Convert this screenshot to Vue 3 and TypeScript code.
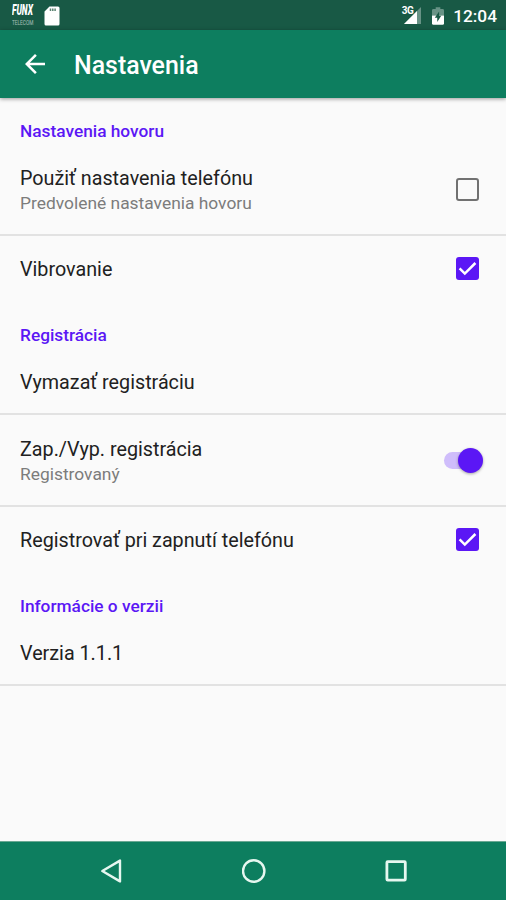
<script setup lang="ts">
import { ref } from 'vue'

type Control = 'none' | 'checkbox' | 'switch'

interface Preference {
  title: string
  summary?: string
  control: Control
  on: boolean
}

interface Category {
  name: string
  items: Preference[]
}

const categories = ref<Category[]>([
  {
    name: 'Nastavenia hovoru',
    items: [
      { title: 'Použiť nastavenia telefónu', summary: 'Predvolené nastavenia hovoru', control: 'checkbox', on: false },
      { title: 'Vibrovanie', control: 'checkbox', on: true },
    ],
  },
  {
    name: 'Registrácia',
    items: [
      { title: 'Vymazať registráciu', control: 'none', on: false },
      { title: 'Zap./Vyp. registrácia', summary: 'Registrovaný', control: 'switch', on: true },
      { title: 'Registrovať pri zapnutí telefónu', control: 'checkbox', on: true },
    ],
  },
  {
    name: 'Informácie o verzii',
    items: [{ title: 'Verzia 1.1.1', control: 'none', on: false }],
  },
])

function toggle(item: Preference) {
  if (item.control !== 'none') item.on = !item.on
}
</script>

<template>
  <div class="screen">
    <div class="status">
      <div class="brand">
        <span class="brand-name">FUNX</span>
        <span class="brand-sub">TELECOM</span>
      </div>
      <svg class="sd" width="16" height="20" viewBox="0 0 16 20">
        <path d="M5.5 0.5H14a1.5 1.5 0 0 1 1.5 1.5V18a1.5 1.5 0 0 1-1.5 1.5H2A1.5 1.5 0 0 1 .5 18V5.5z" fill="#fff" />
        <path d="M6.5 2.5v2.4M8.8 2.5v2.4M11.1 2.5v2.4" stroke="#57806f" stroke-width="1.5" />
      </svg>
      <div class="spacer"></div>
      <span class="net">3G</span>
      <svg class="signal" width="17" height="17" viewBox="0 0 17 17">
        <path d="M17 0V17H0z" fill="#fff" fill-opacity=".35" />
        <path d="M13 4V17H0z" fill="#fff" />
      </svg>
      <svg class="battery" width="12" height="18" viewBox="0 0 13 19">
        <path d="M4 0h5v2h2.5A1.5 1.5 0 0 1 13 3.5V9H0V3.5A1.5 1.5 0 0 1 1.5 2H4z" fill="#fff" fill-opacity=".35" />
        <path d="M0 9h13v8.5a1.5 1.5 0 0 1-1.5 1.5h-10A1.5 1.5 0 0 1 0 17.5z" fill="#fff" />
        <path d="M7.7 4.5 3 11.5h2.7V16L10 9.3H7.7z" fill="#185945" />
      </svg>
      <span class="clock">12:04</span>
    </div>

    <header class="bar">
      <svg class="back" width="20" height="20" viewBox="0 0 20 20">
        <path d="M20 8.8H4.8l7-7L10 0 0 10l10 10 1.8-1.8-7-7H20z" fill="#fff" />
      </svg>
      <h1>Nastavenia</h1>
    </header>

    <main>
      <section v-for="cat in categories" :key="cat.name">
        <h2>{{ cat.name }}</h2>
        <div
          v-for="item in cat.items"
          :key="item.title"
          class="row"
          :class="{ tall: item.summary }"
          @click="toggle(item)"
        >
          <div class="labels">
            <div class="title">{{ item.title }}</div>
            <div v-if="item.summary" class="summary">{{ item.summary }}</div>
          </div>
          <span v-if="item.control === 'checkbox'" class="check" :class="{ on: item.on }">
            <svg v-if="item.on" width="23" height="23" viewBox="0 0 23 23">
              <path d="M3.6 11.4l5.2 5.2L19.4 6" fill="none" stroke="#fff" stroke-width="2.5" />
            </svg>
          </span>
          <span v-if="item.control === 'switch'" class="switch" :class="{ on: item.on }">
            <span class="thumb"></span>
          </span>
        </div>
      </section>
    </main>

    <nav class="nav">
      <svg width="24" height="26" viewBox="0 0 24 26">
        <path d="M20 2.6V23.4L2.3 13z" fill="none" stroke="#e6f7f0" stroke-width="2.4" stroke-linejoin="round" />
      </svg>
      <svg width="24" height="26" viewBox="0 0 24 26">
        <circle cx="11.7" cy="13" r="10.7" fill="none" stroke="#e6f7f0" stroke-width="2.4" />
      </svg>
      <svg width="24" height="26" viewBox="0 0 24 26">
        <rect x="2.9" y="3.7" width="18.4" height="18.4" rx="0.8" fill="none" stroke="#e6f7f0" stroke-width="2.8" />
      </svg>
    </nav>
  </div>
</template>

<style>
body {
  margin: 0;
}
</style>

<style scoped>
.screen {
  display: flex;
  flex-direction: column;
  height: 900px;
  overflow: hidden;
  background: #fafafa;
  font-family: Roboto, sans-serif;
}
.status {
  display: flex;
  align-items: center;
  flex: none;
  box-sizing: border-box;
  height: 30px;
  padding: 1px 9px 0 11px;
  background: #185945;
  color: #fff;
}
.brand {
  display: flex;
  flex-direction: column;
  gap: 3px;
  width: 23px;
  margin: 0 9px 0 1px;
}
.brand-name {
  font-size: 14px;
  line-height: 13px;
  height: 13px;
  font-weight: 900;
  font-style: italic;
  transform: scaleX(0.6);
  transform-origin: left;
}
.brand-sub {
  font-size: 7px;
  line-height: 7px;
  height: 7px;
  transform: scaleX(0.68);
  transform-origin: left;
  opacity: 0.6;
}
.spacer {
  flex: 1;
}
.net {
  align-self: flex-start;
  margin: 4px -9px 0 0;
  font-size: 10px;
  line-height: 11px;
  font-weight: 700;
  letter-spacing: -0.6px;
}
.battery {
  margin: 0 9px 0 11px;
}
.clock {
  font-size: 17.3px;
  font-weight: 500;
}
.bar {
  display: flex;
  align-items: center;
  flex: none;
  height: 68px;
  padding-left: 25px;
  background: #0d7e5f;
  color: #fff;
  box-shadow: 0 1px 4px rgba(0, 0, 0, 0.4);
}
h1 {
  margin: 4px 0 0 29px;
  font-size: 24.9px;
  font-weight: 500;
  line-height: 30px;
}
main {
  flex: 1;
  padding-top: 1px;
}
h2 {
  box-sizing: border-box;
  height: 45px;
  margin: 0;
  padding: 22px 20px 0;
  color: #5b17f5;
  font-size: 17.3px;
  font-weight: 500;
  line-height: 21px;
}
.row {
  display: flex;
  align-items: center;
  justify-content: space-between;
  box-sizing: border-box;
  height: 67px;
  padding: 0 23px 0 20px;
}
.row.tall {
  height: 92px;
}
.row:not(:last-child),
section:last-child .row {
  border-bottom: 2px solid #e2e2e2;
}
.row:first-of-type .labels {
  padding-top: 4px;
}
.row.tall .labels {
  padding-top: 2px;
}
.title {
  color: #212121;
  font-size: 19.74px;
  line-height: 26px;
}
.summary {
  color: #7c7c7c;
  font-size: 17.4px;
  line-height: 23px;
}
.check {
  display: flex;
  box-sizing: border-box;
  width: 23px;
  height: 23px;
  margin: 0 4px 0 0;
  border: 2.5px solid #717171;
  border-radius: 3px;
}
.check.on {
  margin-bottom: 2px;
  border: 0;
  background: #5b17f5;
}
.switch {
  display: flex;
  align-items: center;
  width: 33px;
  height: 17px;
  margin-right: 6px;
  border-radius: 9px;
  background: #bdbdbd;
}
.switch.on {
  justify-content: flex-end;
  background: #cfbdfb;
}
.thumb {
  flex: none;
  width: 25px;
  height: 25px;
  margin-right: -6px;
  border-radius: 50%;
  background: #5b17f5;
  box-shadow: 0 1px 3px rgba(0, 0, 0, 0.35);
}
.nav {
  display: flex;
  align-items: center;
  justify-content: center;
  flex: none;
  gap: 118px;
  height: 58px;
  padding-left: 1px;
  border-top: 1px solid #6aa893;
  background: #0d7e5f;
}
</style>
